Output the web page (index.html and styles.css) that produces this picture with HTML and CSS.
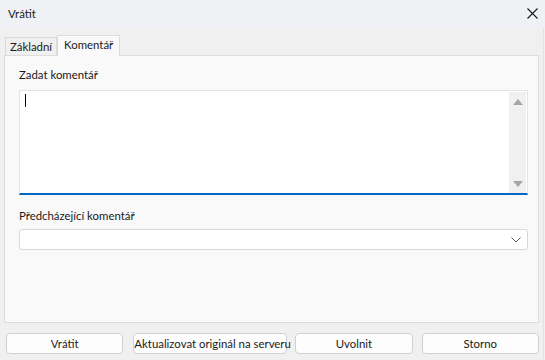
FILE: index.html
```html
<!DOCTYPE html>
<html lang="cs">
<head>
  <meta charset="UTF-8" />
  <title>Vrátit</title>
  <link rel="stylesheet" href="styles.css">
</head>
<body>

  <header class="titlebar">
    <span class="title">Vrátit</span>
    <svg class="close" width="11" height="11" viewBox="0 0 11 11">
      <path d="M0.5 0.5 L10.5 10.5 M10.5 0.5 L0.5 10.5" stroke="#1a1a1a" stroke-width="1.1" fill="none"/>
    </svg>
  </header>

  <main class="dialog">
    <nav class="tabs">
      <span class="tab">Základní</span>
      <span class="tab active">Komentář</span>
    </nav>

    <section class="panel">
      <label class="field-label">Zadat komentář</label>
      <div class="memo">
        <div class="memo-text"><span class="caret"></span></div>
        <div class="scroll">
          <svg width="10" height="6" viewBox="0 0 10 6"><path d="M5 0 L10 6 L0 6 Z" fill="#a6a6a6"/></svg>
          <svg width="10" height="6" viewBox="0 0 10 6"><path d="M0 0 L10 0 L5 6 Z" fill="#a6a6a6"/></svg>
        </div>
      </div>

      <label class="field-label second">Předcházející komentář</label>
      <div class="combo">
        <svg width="10" height="6" viewBox="0 0 10 6"><path d="M0.5 0.5 L5 5 L9.5 0.5" stroke="#555" stroke-width="1" fill="none"/></svg>
      </div>
    </section>

    <footer class="buttons">
      <button class="btn">Vrátit</button>
      <button class="btn wide">Aktualizovat originál na serveru</button>
      <button class="btn">Uvolnit</button>
      <button class="btn">Storno</button>
    </footer>
  </main>

</body>
</html>
```

FILE: styles.css
```css
* {
  box-sizing: border-box;
  margin: 0;
  padding: 0;
}

body {
  width: 545px;
  height: 360px;
  font-family: Lato, "Noto Sans", sans-serif;
  font-size: 11.4px;
  color: #1a1a1a;
  background: #f0f0f0;
  overflow: hidden;
}

.titlebar {
  height: 28px;
  background: #eff1f5;
  display: flex;
  align-items: center;
  justify-content: space-between;
  padding: 0 7px 2px 8px;
}

.dialog {
  padding: 6px 4px 0 4px;
  border-right: 1px solid #e2e2e2;
  margin-right: 1px;
  height: 332px;
}

.tabs {
  display: flex;
  align-items: flex-end;
  padding-left: 1px;
  height: 21px;
}

.tab {
  height: 18px;
  line-height: 17px;
  padding: 0 4px;
  background: #f0f0f0;
  border: 1px solid #d9d9d9;
  border-bottom: none;
}

.tab.active {
  height: 21px;
  line-height: 18px;
  padding: 0 6px;
  background: #f9f9f9;
  border-color: #dcdcdc;
  margin-bottom: -1px;
  position: relative;
  z-index: 1;
}

.panel {
  height: 268px;
  background: #f9f9f9;
  border: 1px solid #dcdcdc;
  padding: 12px 10px 0 14px;
}

.field-label {
  display: block;
  height: 22px;
  line-height: 14px;
}

.field-label.second {
  margin-top: 14px;
  height: 20px;
}

.memo {
  height: 105px;
  background: #fff;
  border: 1px solid #e4e4e4;
  border-bottom: 2px solid #0067c0;
  display: flex;
  padding: 1px 1px 0 0;
}

.memo-text {
  flex: 1;
  padding: 2px 5px;
}

.caret {
  display: block;
  width: 1px;
  height: 13px;
  background: #000;
}

.scroll {
  width: 17px;
  background: #f0f0f0;
  display: flex;
  flex-direction: column;
  justify-content: space-between;
  align-items: center;
  padding: 7px 0 6px 0;
}

.combo {
  height: 21px;
  background: #fff;
  border: 1px solid #d8d8d8;
  border-radius: 3px;
  display: flex;
  align-items: center;
  justify-content: flex-end;
  padding-right: 6px;
}

.buttons {
  display: flex;
  padding: 10px 0 0 2px;
}

.btn {
  width: 118px;
  height: 21px;
  font-family: inherit;
  font-size: 11.4px;
  color: #1a1a1a;
  background: #fdfdfd;
  border: 1px solid #d0d0d0;
  border-radius: 4px;
}

.btn + .btn {
  margin-left: 9px;
}

.btn.wide {
  width: 154px;
  margin-left: 10px;
  white-space: nowrap;
  padding: 0;
}

.btn.wide + .btn {
  margin-left: 8px;
}
```
